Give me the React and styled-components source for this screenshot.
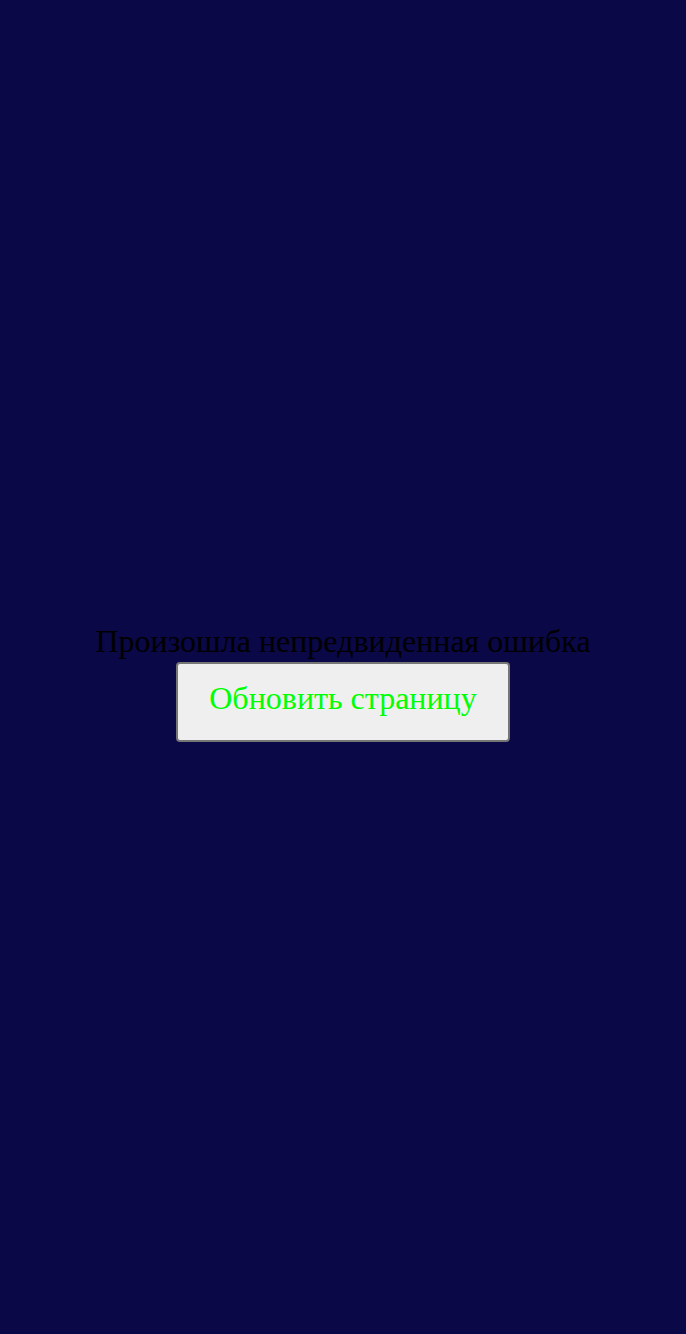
import React from 'react';
import styled, { createGlobalStyle } from 'styled-components';

const GlobalStyle = createGlobalStyle`
	html, body {
		margin: 0;
		padding: 0;
		background-color: #0a0847;
	}
`;

const Container = styled.div`
	box-sizing: border-box;
	display: flex;
	flex-direction: column;
	align-items: center;
	justify-content: center;
	min-height: 100vh;
	width: 100%;
	padding-top: 31px;
	font-family: 'Liberation Serif', 'Times New Roman', serif;
`;

const Message = styled.div`
	font-size: 32px;
	color: #000;
	margin-bottom: 2px;
`;

const ReloadButton = styled.button`
	font-family: 'Liberation Serif', 'Times New Roman', serif;
	font-size: 32px;
	color: #00ff00;
	background-color: #efefef;
	border: 2px solid #767676;
	border-radius: 4px;
	padding: 16px 31px 23px;
	cursor: pointer;
`;

const App = () => {
	return (
		<>
			<GlobalStyle />
			<Container>
				<Message>Произошла непредвиденная ошибка</Message>
				<ReloadButton onClick={() => window.location.reload()}>Обновить страницу</ReloadButton>
			</Container>
		</>
	);
};

export default App;
